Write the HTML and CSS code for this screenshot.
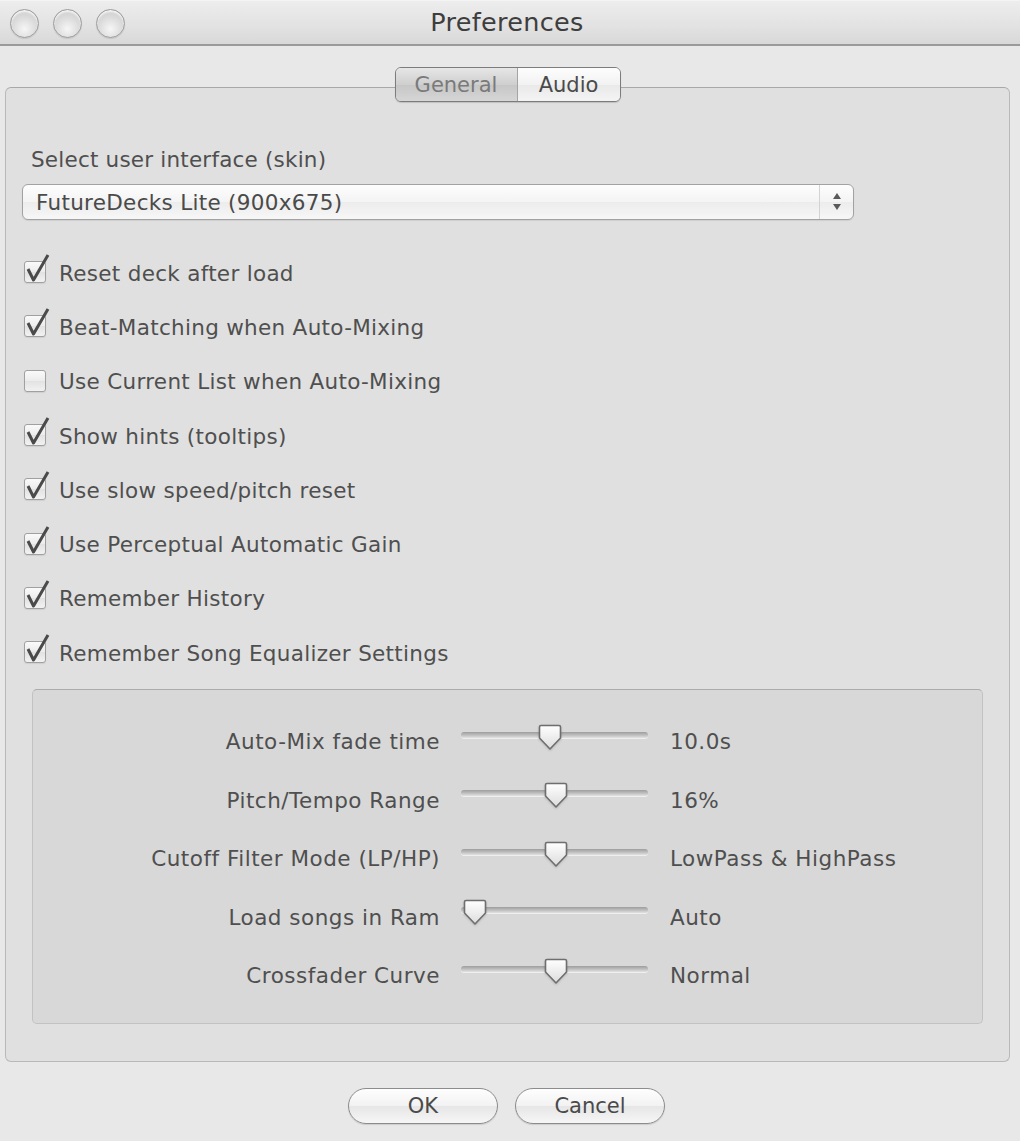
FILE: index.html
```html
<!DOCTYPE html>
<html>
<head>
<meta charset="utf-8">
<link rel="stylesheet" href="styles.css">
<title>Preferences</title>
</head>
<body>
<div class="window">
  <div class="titlebar">
    <div class="lights">
      <span class="light"></span><span class="light"></span><span class="light"></span>
    </div>
    <div class="title">Preferences</div>
    <div class="spacer"></div>
  </div>

  <div class="content">
    <div class="panel">
      <div class="tabs">
        <div class="tab tab-general">General</div>
        <div class="tab tab-audio">Audio</div>
      </div>

      <div class="skin-label">Select user interface (skin)</div>
      <div class="popup">
        <span class="popup-text">FutureDecks Lite (900x675)</span>
        <span class="popup-arrows">
          <svg width="12" height="22" viewBox="0 0 12 22"><path d="M6 2 L10 8 H2 Z" fill="#5a5a5a"/><path d="M2 13 H10 L6 19 Z" fill="#5a5a5a"/></svg>
        </span>
      </div>

      <div class="checks">
        <div class="check-row"><span class="cb checked"><svg class="tick" width="30" height="32" viewBox="0 -8 30 32"><path d="M5 8 L10.5 19 L25 -6" fill="none" stroke="#4a4a4a" stroke-width="3" stroke-linejoin="round"/></svg></span><span class="cl">Reset deck after load</span></div>
        <div class="check-row"><span class="cb checked"><svg class="tick" width="30" height="32" viewBox="0 -8 30 32"><path d="M5 8 L10.5 19 L25 -6" fill="none" stroke="#4a4a4a" stroke-width="3" stroke-linejoin="round"/></svg></span><span class="cl">Beat-Matching when Auto-Mixing</span></div>
        <div class="check-row"><span class="cb"></span><span class="cl">Use Current List when Auto-Mixing</span></div>
        <div class="check-row"><span class="cb checked"><svg class="tick" width="30" height="32" viewBox="0 -8 30 32"><path d="M5 8 L10.5 19 L25 -6" fill="none" stroke="#4a4a4a" stroke-width="3" stroke-linejoin="round"/></svg></span><span class="cl">Show hints (tooltips)</span></div>
        <div class="check-row"><span class="cb checked"><svg class="tick" width="30" height="32" viewBox="0 -8 30 32"><path d="M5 8 L10.5 19 L25 -6" fill="none" stroke="#4a4a4a" stroke-width="3" stroke-linejoin="round"/></svg></span><span class="cl">Use slow speed/pitch reset</span></div>
        <div class="check-row"><span class="cb checked"><svg class="tick" width="30" height="32" viewBox="0 -8 30 32"><path d="M5 8 L10.5 19 L25 -6" fill="none" stroke="#4a4a4a" stroke-width="3" stroke-linejoin="round"/></svg></span><span class="cl">Use Perceptual Automatic Gain</span></div>
        <div class="check-row"><span class="cb checked"><svg class="tick" width="30" height="32" viewBox="0 -8 30 32"><path d="M5 8 L10.5 19 L25 -6" fill="none" stroke="#4a4a4a" stroke-width="3" stroke-linejoin="round"/></svg></span><span class="cl">Remember History</span></div>
        <div class="check-row"><span class="cb checked"><svg class="tick" width="30" height="32" viewBox="0 -8 30 32"><path d="M5 8 L10.5 19 L25 -6" fill="none" stroke="#4a4a4a" stroke-width="3" stroke-linejoin="round"/></svg></span><span class="cl">Remember Song Equalizer Settings</span></div>
      </div>

      <div class="sliders">
        <div class="slider-row">
          <span class="sl-label">Auto-Mix fade time</span>
          <span class="track"><span class="thumb" style="left: 77px"><svg width="24" height="27" viewBox="0 0 24 27"><defs><linearGradient id="tg1" x1="0" y1="0" x2="0" y2="1"><stop offset="0" stop-color="#ffffff"/><stop offset="1" stop-color="#dcdcdc"/></linearGradient></defs><path d="M1.5 3 Q1.5 1.5 3 1.5 H21 Q22.5 1.5 22.5 3 V14 L12 25 L1.5 14 Z" fill="url(#tg1)" stroke="#6e6e6e" stroke-width="1.6" stroke-linejoin="round"/></svg></span></span>
          <span class="sl-value">10.0s</span>
        </div>
        <div class="slider-row">
          <span class="sl-label">Pitch/Tempo Range</span>
          <span class="track"><span class="thumb" style="left: 83px"><svg width="24" height="27" viewBox="0 0 24 27"><path d="M1.5 3 Q1.5 1.5 3 1.5 H21 Q22.5 1.5 22.5 3 V14 L12 25 L1.5 14 Z" fill="url(#tg1)" stroke="#6e6e6e" stroke-width="1.6" stroke-linejoin="round"/></svg></span></span>
          <span class="sl-value">16%</span>
        </div>
        <div class="slider-row">
          <span class="sl-label">Cutoff Filter Mode (LP/HP)</span>
          <span class="track"><span class="thumb" style="left: 83px"><svg width="24" height="27" viewBox="0 0 24 27"><path d="M1.5 3 Q1.5 1.5 3 1.5 H21 Q22.5 1.5 22.5 3 V14 L12 25 L1.5 14 Z" fill="url(#tg1)" stroke="#6e6e6e" stroke-width="1.6" stroke-linejoin="round"/></svg></span></span>
          <span class="sl-value">LowPass &amp; HighPass</span>
        </div>
        <div class="slider-row">
          <span class="sl-label">Load songs in Ram</span>
          <span class="track"><span class="thumb" style="left: 2px"><svg width="24" height="27" viewBox="0 0 24 27"><path d="M1.5 3 Q1.5 1.5 3 1.5 H21 Q22.5 1.5 22.5 3 V14 L12 25 L1.5 14 Z" fill="url(#tg1)" stroke="#6e6e6e" stroke-width="1.6" stroke-linejoin="round"/></svg></span></span>
          <span class="sl-value">Auto</span>
        </div>
        <div class="slider-row">
          <span class="sl-label">Crossfader Curve</span>
          <span class="track"><span class="thumb" style="left: 83px"><svg width="24" height="27" viewBox="0 0 24 27"><path d="M1.5 3 Q1.5 1.5 3 1.5 H21 Q22.5 1.5 22.5 3 V14 L12 25 L1.5 14 Z" fill="url(#tg1)" stroke="#6e6e6e" stroke-width="1.6" stroke-linejoin="round"/></svg></span></span>
          <span class="sl-value">Normal</span>
        </div>
      </div>
    </div>

    <div class="buttons">
      <button class="btn">OK</button>
      <button class="btn">Cancel</button>
    </div>
  </div>
</div>
</body>
</html>
```

FILE: styles.css
```css
html, body {
  margin: 0;
  padding: 0;
}
body {
  width: 1020px;
  height: 1141px;
  overflow: hidden;
  background: #e8e8e8;
  font-family: "DejaVu Sans", "Liberation Sans", sans-serif;
  color: #4f4f4f;
}
.window {
  width: 1020px;
  height: 1141px;
  background: #e8e8e8;
}
.titlebar {
  display: grid;
  grid-template-columns: 1fr auto 1fr;
  align-items: center;
  background: linear-gradient(#ededed, #e2e2e2 60%, #d8d8d8);
  border-top: 1px solid #f4f4f4;
  border-bottom: 2px solid #9a9a9a;
  box-sizing: border-box;
  height: 46px;
}
.lights {
  display: flex;
  gap: 14px;
  padding-left: 10px;
  padding-top: 1px;
}
.light {
  width: 27px;
  height: 27px;
  border-radius: 50%;
  border: 1.5px solid #9c9c9c;
  background: radial-gradient(circle at 50% 70%, #f6f6f6 0%, #dedede 45%, #c4c4c4 100%);
  box-shadow: inset 0 2px 2px rgba(255,255,255,0.8), 0 1px 1px rgba(0,0,0,0.1);
}
.title {
  font-size: 25.5px;
  letter-spacing: 0.3px;
  color: #3e3e3e;
  margin-top: -1px;
  margin-right: 6px;
}
.content {
  padding: 0 10px 0 5px;
}
.panel {
  margin-top: 41px;
  height: 975px;
  box-sizing: border-box;
  border: 1.5px solid #b9b9b9;
  border-top-color: #a8a8a8;
  border-radius: 6px;
  background: #e0e0e0;
  padding: 0 16px;
}
.tabs {
  display: flex;
  width: 226px;
  height: 35px;
  box-sizing: border-box;
  margin: -21px auto 0;
  border: 1.5px solid #7c7c7c;
  border-radius: 6px;
  overflow: hidden;
  font-size: 21px;
  box-shadow: 0 1px 1px rgba(0,0,0,0.15);
}
.tab {
  display: flex;
  align-items: center;
  justify-content: center;
}
.tab-general {
  width: 121px;
  color: #7a7a7a;
  background: linear-gradient(#e6e6e6, #cfcfcf 50%, #c6c6c6 51%, #d6d6d6);
  border-right: 1px solid #a4a4a4;
}
.tab-audio {
  flex: 1;
  color: #4a4a4a;
  background: linear-gradient(#fdfdfd, #f2f2f2 50%, #e9e9e9 51%, #f4f4f4);
}
.skin-label {
  font-size: 21.5px;
  letter-spacing: 0.2px;
  line-height: 26px;
  margin: 45px 0 0 9px;
}
.popup {
  margin-top: 11px;
  width: 832px;
  height: 36px;
  box-sizing: border-box;
  display: flex;
  align-items: center;
  border: 1.5px solid #a2a2a2;
  border-radius: 6px;
  background: linear-gradient(#fdfdfd, #f4f4f4 50%, #ececec 51%, #f7f7f7);
  box-shadow: 0 1px 1px rgba(0,0,0,0.08);
}
.popup-text {
  flex: 1;
  font-size: 21.5px;
  letter-spacing: 0.3px;
  padding-left: 13px;
  color: #4a4a4a;
}
.popup-arrows {
  width: 33px;
  height: 100%;
  display: flex;
  align-items: center;
  justify-content: center;
  border-left: 1px solid #d3d3d3;
}
.checks {
  margin-top: 25px;
  display: flex;
  flex-direction: column;
}
.check-row {
  height: 54.3px;
  display: flex;
  align-items: center;
  padding-left: 2px;
}
.cb {
  position: relative;
  width: 22px;
  height: 22px;
  box-sizing: border-box;
  border: 1.5px solid #a0a0a0;
  border-radius: 3px;
  background: linear-gradient(#fafafa, #ececec 50%, #e2e2e2 51%, #f2f2f2);
  box-shadow: 0 1px 1px rgba(0,0,0,0.08);
}
.tick {
  position: absolute;
  left: -2px;
  top: -9px;
}
.cl {
  font-size: 21.5px;
  letter-spacing: 0.3px;
  margin-left: 13px;
  margin-top: 2px;
  color: #4f4f4f;
}
.sliders {
  margin: 10px 10px 0;
  height: 335px;
  box-sizing: border-box;
  border: 1.5px solid #c2c2c2;
  border-top-color: #ababab;
  border-radius: 5px;
  background: #d8d8d8;
  padding: 22px 0 18px;
  display: flex;
  flex-direction: column;
}
.slider-row {
  height: 58.5px;
  display: grid;
  grid-template-columns: 406px 187px auto;
  column-gap: 22px;
  align-items: center;
  font-size: 21.5px;
  letter-spacing: 0.5px;
}
.sl-label {
  text-align: right;
  color: #4f4f4f;
  margin-right: -1px;
}
.sl-value {
  color: #4f4f4f;
}
.track {
  position: relative;
  height: 6px;
  margin-top: -14px;
  border-radius: 3px;
  background: linear-gradient(#9d9d9d, #c4c4c4 60%, #e2e2e2);
  box-shadow: 0 1px 0 rgba(255,255,255,0.6);
}
.thumb {
  position: absolute;
  top: -8px;
  width: 24px;
  height: 27px;
}
.thumb svg {
  display: block;
  filter: drop-shadow(0 1px 1px rgba(0,0,0,0.15));
}
.buttons {
  display: flex;
  justify-content: center;
  gap: 17px;
  margin-top: 26px;
  padding-right: 2px;
}
.btn {
  width: 150px;
  height: 36px;
  border: 1.5px solid #8c8c8c;
  border-radius: 18px;
  background: linear-gradient(#fefefe, #f2f2f2 50%, #e6e6e6 51%, #f6f6f6);
  font-family: "DejaVu Sans", "Liberation Sans", sans-serif;
  font-size: 21px;
  color: #4a4a4a;
  padding: 0;
  box-shadow: 0 1px 1px rgba(0,0,0,0.12);
}
```
